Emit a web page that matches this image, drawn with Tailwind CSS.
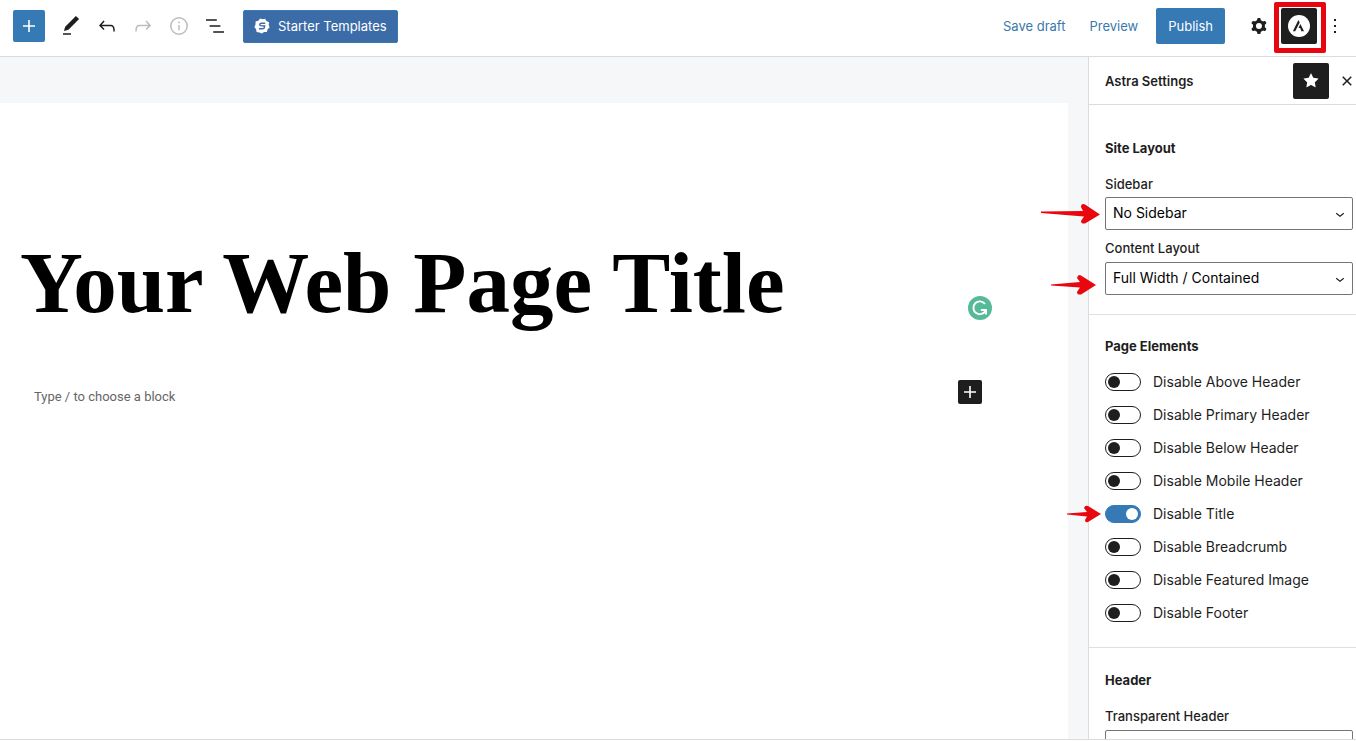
<!DOCTYPE html>
<html lang="en">
<head>
    <meta charset="UTF-8">
    <meta name="viewport" content="width=device-width, initial-scale=1.0">
    <title>Edit Page</title>
    <script src="https://cdn.jsdelivr.net/npm/@tailwindcss/browser@4"></script>
</head>
<body class="flex flex-col h-screen overflow-hidden bg-white pb-px font-['Inter',sans-serif] text-[13px] leading-5 text-[#1e1e1e]">
    <!-- Top bar -->
    <header class="flex shrink-0 items-center justify-between h-[57px] pl-[13px] pr-[3px] pb-1 border-b border-[#dcdcdc]">
        <div class="flex items-center">
            <button type="button" aria-label="Add block" class="flex items-center justify-center size-8 mr-2 rounded-xs bg-[#3579b5] text-white">
                <svg class="size-6" viewBox="0 0 24 24" fill="currentColor"><path d="M18 11.2h-5.2V6h-1.6v5.2H6v1.6h5.2V18h1.6v-5.2H18z"/></svg>
            </button>
            <button type="button" aria-label="Tools" class="flex items-center justify-center size-9">
                <svg class="size-6" viewBox="0 0 24 24" fill="currentColor"><path d="M20.1 5.1L16.9 2 6.2 12.7l-1.3 4.4 4.5-1.3L20.1 5.1zM4 20.8h8v-1.5H4v1.5z"/></svg>
            </button>
            <button type="button" aria-label="Undo" class="flex items-center justify-center size-9">
                <svg class="size-6" viewBox="0 0 24 24" fill="currentColor"><path d="M18.3 11.7c-.6-.6-1.4-.9-2.3-.9H6.7l2.9-3.3-1.1-1-4.5 5L8.5 16l1-1-2.7-2.7H16c.5 0 .9.2 1.3.5 1 1 1 3.4 1 4.5v.3h1.5v-.2c0-1.5 0-4.3-1.5-5.7z"/></svg>
            </button>
            <button type="button" aria-label="Redo" class="flex items-center justify-center size-9 text-[#bcbcbc]">
                <svg class="size-6" viewBox="0 0 24 24" fill="currentColor"><path d="M15.6 6.5l-1.1 1 2.9 3.3H8c-.9 0-1.7.3-2.3.9-1.4 1.5-1.4 4.2-1.4 5.6v.2h1.5v-.3c0-1.1 0-3.5 1-4.5.3-.3.7-.5 1.3-.5h9.2L14.5 15l1.1 1.1 4.6-4.6-4.6-5z"/></svg>
            </button>
            <button type="button" aria-label="Details" class="flex items-center justify-center size-9 text-[#bcbcbc]">
                <svg class="size-6" viewBox="0 0 24 24" fill="none" stroke="currentColor" stroke-width="1.5"><circle cx="12" cy="12" r="8.2"/><path d="M12 11v5.2M12 7.4v1.8"/></svg>
            </button>
            <button type="button" aria-label="List view" class="flex items-center justify-center size-9 mr-[10px]">
                <svg class="size-6" viewBox="0 0 24 24" fill="currentColor"><path d="M13.8 5.2H3v1.5h10.8V5.2zm-3.6 12v1.5H21v-1.5H10.2zm7.2-6H6.6v1.5h10.8v-1.5z"/></svg>
            </button>
            <button type="button" class="flex items-center gap-2 h-[33px] px-[10px] rounded-xs bg-[#3c6ca8] border border-[#3579b5] text-white whitespace-nowrap">
                <svg class="size-4" viewBox="0 0 16 16">
                    <path fill="#fff" d="M6.2.4 8.6 1.3l2.500-.5 1.300 2.200 2.700 1.200-.4 2.700.9 2.500-2 1.800-.8 2.700-2.800.2L8 15.600l-2.500-1.200-2.900-.4-.5-2.700L.4 9l1.100-2.500.1-2.900 2.700-.9z"/>
                    <path fill="none" stroke="#3c6ca8" stroke-width="1.4" d="M11.200 5.200H7.400c-2.200 0-2.200 2.700 0 2.700h1.400c2.200 0 2.200 2.800 0 2.800H4.900M8 7.900h3.500"/>
                </svg>
                Starter Templates
            </button>
        </div>
        <div class="flex items-center whitespace-nowrap">
            <a href="#" class="mr-6 text-[#3a79ab]">Save draft</a>
            <a href="#" class="mr-[18px] text-[#3a79ab]">Preview</a>
            <button type="button" class="h-9 px-3 mr-4 rounded-xs bg-[#3579b5] text-white">Publish</button>
            <button type="button" aria-label="Settings" class="flex items-center justify-center size-9 mr-1">
                <svg class="size-6" viewBox="0 0 24 24" fill="currentColor"><path fill-rule="evenodd" d="M10.289 4.836A1 1 0 0111.275 4h1.306a1 1 0 01.987.836l.244 1.466c.787.26 1.503.679 2.108 1.218l1.393-.522a1 1 0 011.216.437l.653 1.130a1 1 0 01-.23 1.273l-1.148.944a6.025 6.025 0 010 2.435l1.149.946a1 1 0 01.23 1.272l-.653 1.130a1 1 0 01-1.216.437l-1.394-.522c-.605.54-1.320.958-2.108 1.218l-.244 1.466a1 1 0 01-.987.836h-1.306a1 1 0 01-.986-.836l-.244-1.466a5.995 5.995 0 01-2.108-1.218l-1.394.522a1 1 0 01-1.217-.436l-.653-1.131a1 1 0 01.23-1.272l1.149-.946a6.026 6.026 0 010-2.435l-1.148-.944a1 1 0 01-.23-1.272l.653-1.131a1 1 0 011.217-.437l1.393.522a5.994 5.994 0 012.108-1.218l.244-1.466zM14.929 12a3 3 0 11-6 0 3 3 0 016 0z"/></svg>
            </button>
            <button type="button" aria-label="Astra Settings" class="relative flex items-center justify-center size-9 rounded-xs bg-[#1e1e1e]">
                <svg class="size-[22px]" viewBox="0 0 22 22">
                    <circle cx="11" cy="11" r="11" fill="#fff"/>
                    <path fill="#1e1e1e" d="M10.400 5.100 4.900 16.200h2.300l4.500-8.600zM12.400 9.100l-1.900 3.800h1.700l1.200 3.300h2.600z"/>
                </svg>
                <!-- highlight -->
                <span class="absolute -left-[7px] -right-[9px] -top-[6px] -bottom-[9px] border-[5px] border-[#e8060f] rounded-xs"></span>
            </button>
            <button type="button" aria-label="Options" class="flex items-center justify-center size-9">
                <svg class="size-6" viewBox="0 0 24 24" fill="currentColor"><path d="M13 19h-2v-2h2v2zm0-6h-2v-2h2v2zm0-6h-2V5h2v2z"/></svg>
            </button>
        </div>
    </header>

    <div class="flex flex-1 min-h-0 overflow-hidden border-b border-[#dcdcdc]">
        <!-- Editor -->
        <main class="flex-1 min-w-0 flex pt-[46px] pr-5 bg-[#f6f7f9]">
            <div class="flex-1 min-w-0 bg-white pt-[130px] pl-5 pr-[86px]">
                <div class="relative">
                    <h1 class="font-['Liberation_Serif',serif] font-bold text-[87px] leading-[100px] text-black whitespace-nowrap">Your Web Page Title</h1>
                    <svg class="absolute -right-[10px] top-[63px] size-6" viewBox="0 0 24 24">
                        <circle cx="12" cy="12" r="12" fill="#56b997"/>
                        <path fill="none" stroke="#fff" stroke-width="1.9" d="M17 8a6.400 6.400 0 1 0 .6 6.500M12.800 14h5.200v4.600"/>
                    </svg>
                </div>
                <div class="flex items-center mt-[42px] pl-[14px]">
                    <input type="text" aria-label="Block" placeholder="Type / to choose a block" class="flex-1 min-w-0 pt-[10px] outline-none font-['Roboto',sans-serif] text-[13px] leading-6 placeholder:text-[#666666]">
                    <button type="button" aria-label="Add block" class="flex items-center justify-center size-6 rounded-xs bg-[#1e1e1e] text-white">
                        <svg class="size-6" viewBox="0 0 24 24" fill="currentColor"><path d="M18 11.200h-5.200V6h-1.600v5.200H6v1.600h5.200V18h1.600v-5.200H18z"/></svg>
                    </button>
                </div>
            </div>
        </main>

        <!-- Astra settings -->
        <aside class="w-[268px] shrink-0 border-l border-[#dcdcdc]">
            <div class="flex items-center h-12 pl-4 border-b border-[#dcdcdc]">
                <h2 class="flex-1 font-semibold">Astra Settings</h2>
                <button type="button" aria-label="Unpin" class="flex items-center justify-center size-9 rounded-xs bg-[#1e1e1e] text-white">
                    <svg class="size-6" viewBox="0 0 24 24" fill="currentColor"><path d="M11.776 4.454a.25.25 0 01.448 0l2.069 4.192a.25.25 0 00.188.137l4.626.672a.25.25 0 01.139.426l-3.348 3.263a.25.25 0 00-.072.222l.79 4.607a.25.25 0 01-.362.263l-4.138-2.175a.25.25 0 00-.232 0l-4.138 2.175a.25.25 0 01-.363-.263l.79-4.607a.25.25 0 00-.071-.222L4.754 9.881a.25.25 0 01.139-.426l4.626-.672a.25.25 0 00.188-.137l2.069-4.192z"/></svg>
                </button>
                <button type="button" aria-label="Close" class="flex items-center justify-end w-[27px] h-9">
                    <svg class="size-[18px]" viewBox="3 3 18 18" fill="currentColor"><path d="M12 13.060l3.712 3.713 1.061-1.060L13.061 12l3.712-3.712-1.060-1.060L12 10.938 8.288 7.227l-1.061 1.060L10.939 12l-3.712 3.712 1.060 1.061L12 13.061z"/></svg>
                </button>
            </div>

            <section class="pt-[33px] pb-[19px] pl-4 pr-[3px] border-b border-[#e0e0e0]">
                <h3 class="mb-4 font-bold">Site Layout</h3>
                <label for="sidebar" class="block mb-[3px] font-medium">Sidebar</label>
                <div class="relative mb-2">
                    <select id="sidebar" class="block w-full h-[33px] px-[7px] pb-[2px] appearance-none border border-[#757575] rounded-xs bg-white text-[14px] text-black">
                        <option>No Sidebar</option>
                        <option>Left Sidebar</option>
                        <option>Right Sidebar</option>
                    </select>
                    <svg class="absolute right-1 top-2 size-[18px] pointer-events-none" viewBox="0 0 24 24" fill="currentColor"><path d="M17.500 11.600L12 16l-5.500-4.400.9-1.200L12 14l4.500-3.600 1 1.200z"/></svg>
                    <svg class="absolute right-full mr-[5px] top-[6px] w-[60px] h-[22px]" viewBox="0 0 60 22" fill="#e8060f"><path d="M1 8.500 43 8 41 4Q41 0 45 1.500L60 11.500 45 20.500Q41 21 41 18L44 13.500 1 10z"/></svg>
                </div>
                <label for="content-layout" class="block mb-1 font-medium">Content Layout</label>
                <div class="relative">
                    <select id="content-layout" class="block w-full h-[33px] px-[7px] pb-[2px] appearance-none border border-[#757575] rounded-xs bg-white text-[14px] text-black">
                        <option>Full Width / Contained</option>
                        <option>Boxed</option>
                        <option>Full Width / Stretched</option>
                    </select>
                    <svg class="absolute right-1 top-2 size-[18px] pointer-events-none" viewBox="0 0 24 24" fill="currentColor"><path d="M17.500 11.600L12 16l-5.500-4.400.9-1.200L12 14l4.500-3.600 1 1.200z"/></svg>
                    <svg class="absolute right-full mr-[9px] top-3 w-[46px] h-[22px]" viewBox="0 0 46 22" fill="#e8060f"><path d="M1 10.500 30 8 27 4Q28 0 31 1.500L46 11 31 20.500Q27 21 27 18L30 13.500 1 11.500z"/></svg>
                </div>
            </section>

            <section class="pt-[21px] pb-6 pl-4 pr-[3px] border-b border-[#e0e0e0]">
                <h3 class="mb-4 font-bold">Page Elements</h3>
                <div class="flex flex-col gap-[13px] text-[14px]">
                    <label class="flex items-center gap-3"><input type="checkbox" class="relative shrink-0 w-9 h-[18px] appearance-none rounded-full border border-[#1e1e1e] bg-white before:absolute before:left-[2px] before:top-[2px] before:size-3 before:rounded-full before:bg-[#1e1e1e] checked:border-[#3579b5] checked:bg-[#3579b5] checked:before:left-5 checked:before:bg-white">Disable Above Header</label>
                    <label class="flex items-center gap-3"><input type="checkbox" class="relative shrink-0 w-9 h-[18px] appearance-none rounded-full border border-[#1e1e1e] bg-white before:absolute before:left-[2px] before:top-[2px] before:size-3 before:rounded-full before:bg-[#1e1e1e] checked:border-[#3579b5] checked:bg-[#3579b5] checked:before:left-5 checked:before:bg-white">Disable Primary Header</label>
                    <label class="flex items-center gap-3"><input type="checkbox" class="relative shrink-0 w-9 h-[18px] appearance-none rounded-full border border-[#1e1e1e] bg-white before:absolute before:left-[2px] before:top-[2px] before:size-3 before:rounded-full before:bg-[#1e1e1e] checked:border-[#3579b5] checked:bg-[#3579b5] checked:before:left-5 checked:before:bg-white">Disable Below Header</label>
                    <label class="flex items-center gap-3"><input type="checkbox" class="relative shrink-0 w-9 h-[18px] appearance-none rounded-full border border-[#1e1e1e] bg-white before:absolute before:left-[2px] before:top-[2px] before:size-3 before:rounded-full before:bg-[#1e1e1e] checked:border-[#3579b5] checked:bg-[#3579b5] checked:before:left-5 checked:before:bg-white">Disable Mobile Header</label>
                    <label class="relative flex items-center gap-3">
                        <input type="checkbox" checked class="relative shrink-0 w-9 h-[18px] appearance-none rounded-full border border-[#1e1e1e] bg-white before:absolute before:left-[2px] before:top-[2px] before:size-3 before:rounded-full before:bg-[#1e1e1e] checked:border-[#3579b5] checked:bg-[#3579b5] checked:before:left-5 checked:before:bg-white">Disable Title
                        <svg class="absolute right-full mr-1 top-px w-[35px] h-[18px]" viewBox="0 0 35 18" fill="#e8060f"><path d="M1 8.500 21 7 18 3Q19 0 22 1L35 9 22 17Q19 18 19 15L21 11.500 1 9.500z"/></svg>
                    </label>
                    <label class="flex items-center gap-3"><input type="checkbox" class="relative shrink-0 w-9 h-[18px] appearance-none rounded-full border border-[#1e1e1e] bg-white before:absolute before:left-[2px] before:top-[2px] before:size-3 before:rounded-full before:bg-[#1e1e1e] checked:border-[#3579b5] checked:bg-[#3579b5] checked:before:left-5 checked:before:bg-white">Disable Breadcrumb</label>
                    <label class="flex items-center gap-3"><input type="checkbox" class="relative shrink-0 w-9 h-[18px] appearance-none rounded-full border border-[#1e1e1e] bg-white before:absolute before:left-[2px] before:top-[2px] before:size-3 before:rounded-full before:bg-[#1e1e1e] checked:border-[#3579b5] checked:bg-[#3579b5] checked:before:left-5 checked:before:bg-white">Disable Featured Image</label>
                    <label class="flex items-center gap-3"><input type="checkbox" class="relative shrink-0 w-9 h-[18px] appearance-none rounded-full border border-[#1e1e1e] bg-white before:absolute before:left-[2px] before:top-[2px] before:size-3 before:rounded-full before:bg-[#1e1e1e] checked:border-[#3579b5] checked:bg-[#3579b5] checked:before:left-5 checked:before:bg-white">Disable Footer</label>
                </div>
            </section>

            <section class="pt-[22px] pl-4 pr-[3px]">
                <h3 class="mb-4 font-bold">Header</h3>
                <label for="transparent-header" class="block mb-1 font-medium">Transparent Header</label>
                <select id="transparent-header" class="block w-full h-[33px] px-[7px] pb-[2px] appearance-none border border-[#757575] rounded-xs bg-white text-[14px] text-black">
                    <option>Inherit</option>
                    <option>Enabled</option>
                    <option>Disabled</option>
                </select>
            </section>
        </aside>
    </div>
</body>
</html>
